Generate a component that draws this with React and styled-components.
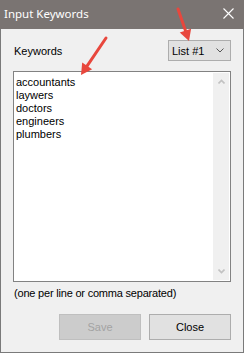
import styled, { createGlobalStyle } from "styled-components";

const GlobalStyle = createGlobalStyle`
html, body {
  margin: 0;
  padding: 0;
  background: #f0f0f0;
}
* { box-sizing: border-box; }
`;

const Window = styled.div`
position: relative;
width: 244px;
height: 353px;
background: #f0f0f0;
border: 1px solid #7a7a7a;
border-top: none;
display: flex;
flex-direction: column;
font-family: "Liberation Sans", Arial, sans-serif;
font-size: 11px;
color: #000;
`;

const TitleBar = styled.div`
height: 29px;
margin: 0 -1px;
background: #7a7472;
display: flex;
align-items: center;
justify-content: space-between;
padding: 0 0 3px 4px;
color: #fff;
font-family: "Noto Sans", "Open Sans", sans-serif;
font-size: 11.5px;
`;

const CloseX = styled.div`
width: 30px;
display: flex;
justify-content: center;
margin-right: 1px;
`;

const Body = styled.div`
flex: 1;
display: flex;
flex-direction: column;
padding: 11px 12px 0 12px;
`;

const TopRow = styled.div`
display: flex;
align-items: center;
justify-content: space-between;
height: 21px;
padding-left: 1px;
margin-bottom: 10px;
`;

const Dropdown = styled.div`
width: 63px;
height: 21px;
background: #e1e1e1;
border: 1px solid #adadad;
display: flex;
align-items: center;
justify-content: space-between;
padding: 0 6px 0 3px;
`;

const TextBox = styled.div`
height: 211px;
border: 1px solid #828282;
background: #fff;
display: flex;
`;

const Lines = styled.div`
flex: 1;
padding: 4px 2px;
line-height: 13px;
`;

const ScrollBar = styled.div`
width: 16px;
margin: 1px 1px 1px 0;
background: #f0f0f0;
display: flex;
flex-direction: column;
justify-content: space-between;
align-items: center;
padding: 6px 0;
`;

const Hint = styled.div`
margin-top: 5px;
padding-left: 1px;
letter-spacing: -0.2px;
`;

const ButtonRow = styled.div`
display: flex;
justify-content: flex-end;
gap: 8px;
margin-top: 15px;
`;

const Button = styled.div`
width: 82px;
height: 26px;
display: flex;
align-items: center;
justify-content: center;
background: ${(p) => (p.disabled ? "#cccccc" : "#e1e1e1")};
border: 1px solid ${(p) => (p.disabled ? "#bfbfbf" : "#adadad")};
color: ${(p) => (p.disabled ? "#a3a3a3" : "#000")};
`;

const Overlay = styled.svg`
position: absolute;
left: 0;
top: 0;
pointer-events: none;
`;

function Arrow({ x1, y1, x2, y2 }) {
    const a = Math.atan2(y2 - y1, x2 - x1);
    const len = 11, w = 6;
    const bx = x2 - Math.cos(a) * len, by = y2 - Math.sin(a) * len;
    const px = -Math.sin(a) * w, py = Math.cos(a) * w;
    return (
        <g>
            <line x1={x1} y1={y1} x2={bx} y2={by} stroke="#e8473d" strokeWidth="3" strokeLinecap="round" />
            <polygon points={`${x2},${y2} ${bx + px},${by + py} ${bx - px},${by - py}`} fill="#e8473d" />
        </g>
    );
}

export default function App() {
    const words = ["accountants", "laywers", "doctors", "engineers", "plumbers"];
    return (
        <>
            <GlobalStyle />
            <Window>
                <TitleBar>
                    <span>Input Keywords</span>
                    <CloseX>
                        <svg width="11" height="11" viewBox="0 0 11 11">
                            <path d="M0.5 0.5 L10.5 10.5 M10.5 0.5 L0.5 10.5" stroke="#fff" strokeWidth="1.1" />
                        </svg>
                    </CloseX>
                </TitleBar>
                <Body>
                    <TopRow>
                        <span>Keywords</span>
                        <Dropdown>
                            <span>List #1</span>
                            <svg width="8" height="5" viewBox="0 0 8 5">
                                <path d="M0.5 0.5 L4 4 L7.5 0.5" stroke="#555" fill="none" strokeWidth="1" />
                            </svg>
                        </Dropdown>
                    </TopRow>
                    <TextBox>
                        <Lines>
                            {words.map((w) => <div key={w}>{w}</div>)}
                        </Lines>
                        <ScrollBar>
                            <svg width="7" height="5" viewBox="0 0 7 5">
                                <path d="M0.5 4.5 L3.5 1.5 L6.5 4.5" stroke="#c2c2c2" fill="none" strokeWidth="1.6" />
                            </svg>
                            <svg width="7" height="5" viewBox="0 0 7 5">
                                <path d="M0.5 0.5 L3.5 3.5 L6.5 0.5" stroke="#c2c2c2" fill="none" strokeWidth="1.6" />
                            </svg>
                        </ScrollBar>
                    </TextBox>
                    <Hint>(one per line or comma separated)</Hint>
                    <ButtonRow>
                        <Button disabled>Save</Button>
                        <Button>Close</Button>
                    </ButtonRow>
                </Body>
                <Overlay width="244" height="353">
                    <Arrow x1={105} y1={38} x2={80} y2={75} />
                    <Arrow x1={177} y1={9} x2={188} y2={41} />
                </Overlay>
            </Window>
        </>
    );
}
